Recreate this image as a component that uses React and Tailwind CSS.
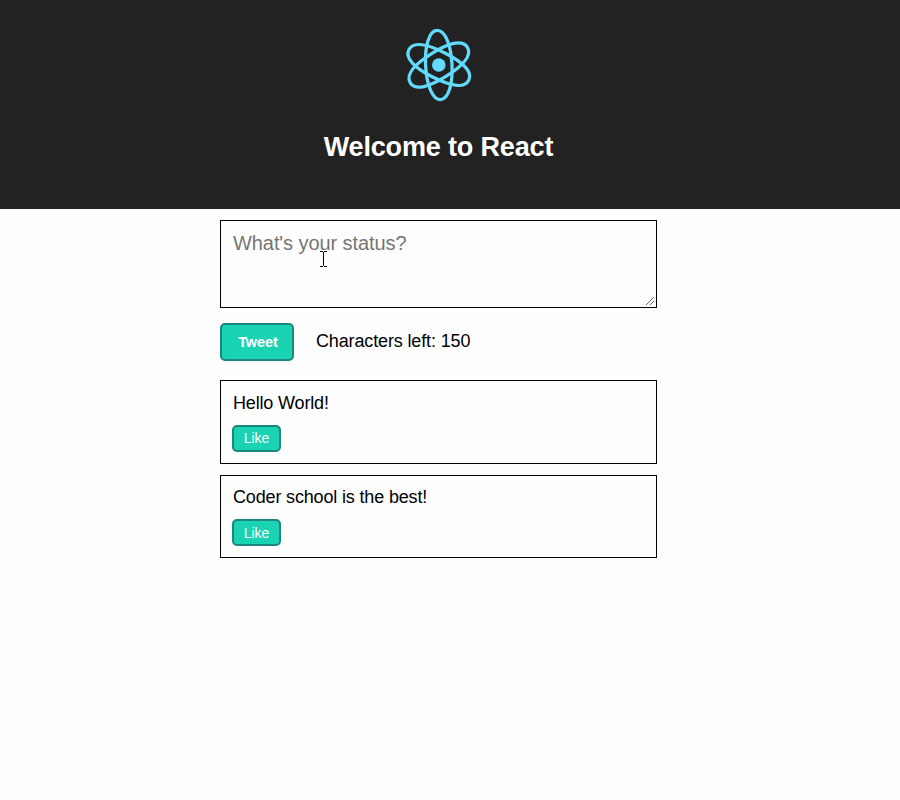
const ORBIT =
  "M0 -34.6C8 -34.6 13.2 -19.4 13.2 0S8 34.6 0 34.6S-13.2 19.4 -13.2 0S-8 -34.6 0 -34.6Z";
const SIDE_ORBIT =
  "M0 -33.6C9.6 -33.6 13.5 -19.4 13.5 0S9.6 33.6 0 33.6S-13.5 19.4 -13.5 0S-9.6 -33.6 0 -33.6Z";

function ReactLogo() {
  return (
    <svg className="block h-[80px] w-[80px]" viewBox="-39.8 -40 80 80" fill="none" stroke="#61dafb" strokeWidth="3.3">
      <circle r="6.8" fill="#61dafb" stroke="none" />
      <g transform="rotate(-3)">
        <path d={ORBIT} />
        <path d={SIDE_ORBIT} transform="rotate(61)" />
        <path d={SIDE_ORBIT} transform="rotate(120)" />
      </g>
    </svg>
  );
}

function Post({ text, className, buttonClassName }) {
  return (
    <article className={`border border-black pl-[11px] ${className}`}>
      <p className="pl-px text-[18px] leading-[22px] tracking-[-0.16px]">{text}</p>
      <button
        className={`mt-[11px] block h-[27px] w-[49px] rounded-[5px] border-2 border-[#1b877e] bg-[#1ad3b3] text-[14px] leading-[23px] text-white ${buttonClassName}`}
      >
        Like
      </button>
    </article>
  );
}

export default function App() {
  return (
    <div className="min-h-screen bg-[#fefefe] font-['Liberation_Sans',Arial,sans-serif] text-black">
      <header className="flex h-[209px] flex-col items-center bg-[#222] pr-[23px] pt-[25px] text-white">
        <ReactLogo />
        <h1 className="mt-[26px] text-[27px] font-bold leading-[32px] tracking-[-0.16px]">Welcome to React</h1>
      </header>
      <main className="ml-[220px] w-[437px] pt-[11px]">
        <div className="relative h-[88px]">
          <textarea
            placeholder="What's your status?"
            className="block h-[88px] w-full resize-none border border-black bg-[#fefefe] px-[12px] py-[11px] text-[20px] leading-[23px] tracking-[-0.08px] outline-none placeholder:text-[#757575]"
          />
          <svg
            className="absolute bottom-[3px] right-[3px] h-[8px] w-[8px]"
            viewBox="0 0 8 8"
            stroke="#666"
            strokeWidth="1"
          >
            <path d="M0 8l8-8M4 8l4-4" />
          </svg>
          <svg
            className="absolute left-[100px] top-[31px] h-[16px] w-[7px]"
            viewBox="0 0 7 16"
            fill="none"
            stroke="#000"
            shapeRendering="crispEdges"
          >
            <path d="M0 .5h3M4 .5h3M3.5 1v14M0 15.5h3M4 15.5h3" />
          </svg>
        </div>
        <div className="mt-[15px] flex h-[38px]">
          <button className="h-[38px] w-[74px] rounded-[5px] border-2 border-[#1b877e] bg-[#1ad3b3] pl-[2px] text-[14.4px] font-bold leading-[34px] text-white">
            Tweet
          </button>
          <span className="ml-[22px] text-[18px] leading-[36px] tracking-[-0.14px]">Characters left: 150</span>
        </div>
        <Post text="Hello World!" className="mt-[19px] h-[84px] pt-[11px]" buttonClassName="" />
        <Post text="Coder school is the best!" className="mt-[11px] h-[83px] pt-[10px]" buttonClassName="pt-px" />
      </main>
    </div>
  );
}
